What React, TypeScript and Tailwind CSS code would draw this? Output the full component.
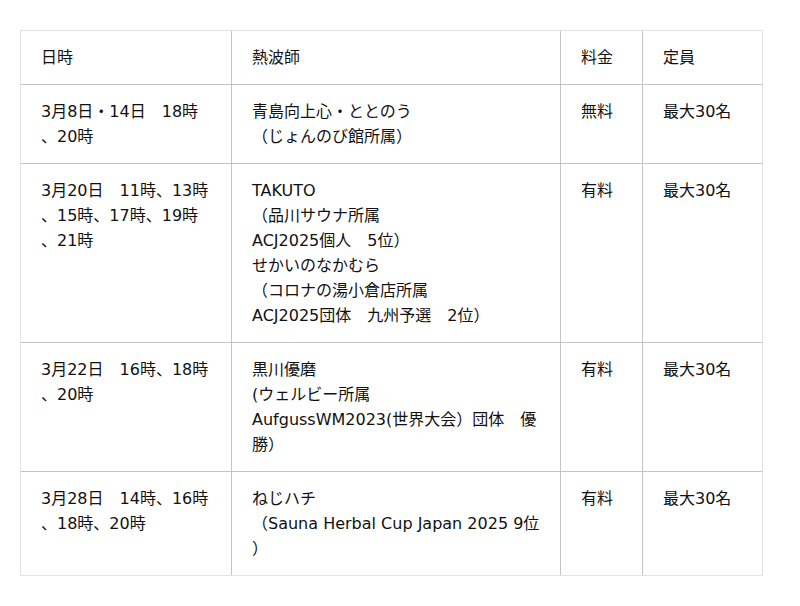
import React from "react";

type Row = { date: string[]; master: string[]; fee: string; cap: string };

const rows: Row[] = [
  {
    date: ["3月8日・14日　18時", "、20時"],
    master: ["青島向上心・ととのう", "（じょんのび館所属）"],
    fee: "無料",
    cap: "最大30名",
  },
  {
    date: ["3月20日　11時、13時", "、15時、17時、19時", "、21時"],
    master: [
      "TAKUTO",
      "（品川サウナ所属",
      "ACJ2025個人　5位）",
      "せかいのなかむら",
      "（コロナの湯小倉店所属",
      "ACJ2025団体　九州予選　2位）",
    ],
    fee: "有料",
    cap: "最大30名",
  },
  {
    date: ["3月22日　16時、18時", "、20時"],
    master: ["黒川優磨", "(ウェルビー所属", "AufgussWM2023(世界大会）団体　優", "勝）"],
    fee: "有料",
    cap: "最大30名",
  },
  {
    date: ["3月28日　14時、16時", "、18時、20時"],
    master: ["ねじハチ", "（Sauna Herbal Cup Japan 2025 9位", "）"],
    fee: "有料",
    cap: "最大30名",
  },
];

function Lines({ lines }: { lines: string[] }) {
  return (
    <>
      {lines.map((l, i) => (
        <div key={i} className="whitespace-pre">
          {l}
        </div>
      ))}
    </>
  );
}

export default function App() {
  const cell = "px-5 py-[14px]";
  return (
    <div
      className="w-[800px] h-[606px] bg-white text-[16px] leading-[25px] text-[#111]"
      style={{ fontFamily: '"DejaVu Sans", "Noto Sans CJK JP", sans-serif' }}
    >
      <div className="pt-[30px] pl-[20px]">
        <div className="w-[743px] border border-[#e2e2e2]">
          <div className="grid grid-cols-[210px_329px_82px_120px]">
            <div className={cell}>日時</div>
            <div className={`${cell} border-l border-[#c4c4c4]`}>熱波師</div>
            <div className={`${cell} border-l border-[#c4c4c4]`}>料金</div>
            <div className={`${cell} border-l border-[#c4c4c4]`}>定員</div>
          </div>
          {rows.map((r, i) => (
            <div
              key={i}
              className="grid grid-cols-[210px_329px_82px_120px] border-t border-[#c4c4c4]"
            >
              <div className={cell}>
                <Lines lines={r.date} />
              </div>
              <div className={`${cell} border-l border-[#c4c4c4]`}>
                <Lines lines={r.master} />
              </div>
              <div className={`${cell} border-l border-[#c4c4c4]`}>{r.fee}</div>
              <div className={`${cell} border-l border-[#c4c4c4]`}>{r.cap}</div>
            </div>
          ))}
        </div>
      </div>
    </div>
  );
}
